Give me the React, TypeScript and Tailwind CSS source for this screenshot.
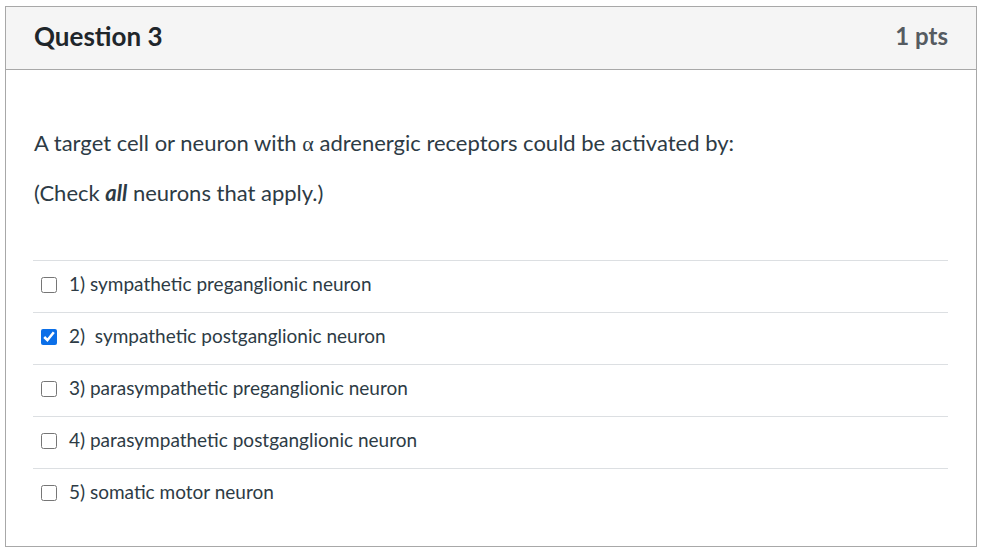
import React from "react";

type Answer = {
  id: string;
  label: string;
  checked?: boolean;
};

const answers: Answer[] = [
  { id: "a1", label: "1) sympathetic preganglionic neuron" },
  { id: "a2", label: "2)\u00a0 sympathetic postganglionic neuron", checked: true },
  { id: "a3", label: "3) parasympathetic preganglionic neuron" },
  { id: "a4", label: "4) parasympathetic postganglionic neuron" },
  { id: "a5", label: "5) somatic motor neuron" },
];

export default function App() {
  return (
    <div className="min-h-[557px] w-[982px] bg-white pl-[5px] pt-[6px] font-['Lato','Liberation_Sans',sans-serif] text-[#2d3b45]">
      <div className="w-[972px] border border-[#a8a8a8] bg-white">
        <div className="flex h-[63px] items-center justify-between border-b border-[#a8a8a8] bg-[#f5f5f5] px-[28px] pb-[4px]">
          <h2 className="text-[26px] font-bold leading-none text-[#1f262b]">Question 3</h2>
          <span className="text-[24px] font-bold leading-none text-[#555b61]">1 pts</span>
        </div>

        <div className="px-[28px] pb-[26px] pt-[58px]">
          <p className="text-[22px] leading-[30px]">
            A target cell or neuron with{" "}
            <span className="font-['Liberation_Serif',serif]">α</span> adrenergic receptors could be activated by:
          </p>
          <p className="mt-[19px] text-[22px] leading-[30px]">
            (Check <em className="font-bold">all</em> neurons that apply.)
          </p>

          <div className="ml-[-1px] mt-[52px]">
            {answers.map((a) => (
              <label
                key={a.id}
                className="flex h-[52px] items-center gap-[12px] border-t border-[#dcdfe2] pl-[8px] pb-[4px] text-[19px]"
              >
                <input
                  type="checkbox"
                  defaultChecked={a.checked}
                  className="m-0 h-[16px] w-[16px] accent-[#0b6fe8]"
                />
                <span>{a.label}</span>
              </label>
            ))}
          </div>
        </div>
      </div>
    </div>
  );
}
